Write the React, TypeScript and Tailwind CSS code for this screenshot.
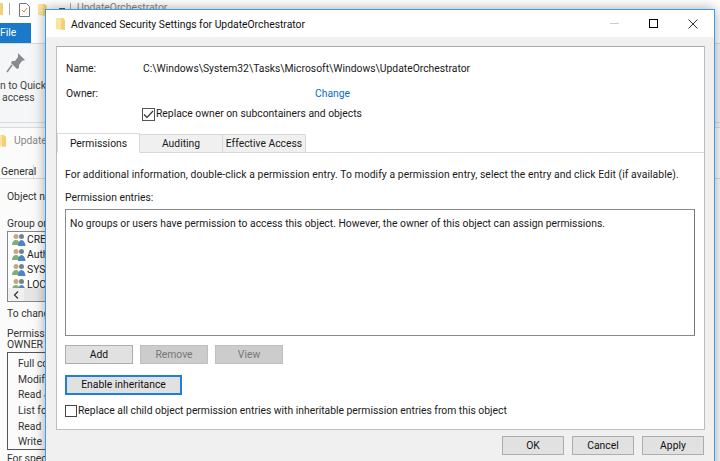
const font = "font-['Roboto',sans-serif]";

function FolderIcon({ className }: { className?: string }) {
  return (
    <svg width="9" height="14" viewBox="0 0 9 14" className={className}>
      <path d="M0 1h7l2 2v10l-9-1z" fill="#f3d277" />
      <path d="M0 1h5v11H0z" fill="#fbe59e" />
    </svg>
  );
}

function UsersIcon() {
  return (
    <svg width="14" height="13" viewBox="0 0 14 13" className="shrink-0">
      <circle cx="4" cy="3.500" r="2.500" fill="#c8a878" />
      <path d="M0 12c0-3 1.500-5 4-5s3.500 2 3.500 5z" fill="#7faf78" />
      <circle cx="9.500" cy="3.500" r="2.500" fill="#6f8296" />
      <path d="M6 13c0-3 1.500-6 3.500-6s4 3 4 6z" fill="#4d85c5" />
    </svg>
  );
}

function WinButton({ children, className = "", w = "w-[62px]" }: { children: string; className?: string; w?: string }) {
  return (
    <button className={`${w} h-[19px] pt-px flex items-center justify-center border ${className || "bg-[#e1e1e1] border-[#adadad] text-[#111]"}`}>
      {children}
    </button>
  );
}

function BackgroundWindow() {
  return (
    <div className="w-full h-full flex flex-col text-[10.350px] text-[#333]">
      {/* quick access bar */}
      <div className="h-[23px] flex items-start pt-[3px] shrink-0 bg-white">
        <div className="w-[3px] h-[12px] bg-[#f3d277]" />
        <div className="w-px h-[12px] bg-[#aaa] ml-[6px]" />
        <svg width="11" height="14" viewBox="0 0 11 14" className="ml-[9px]">
          <path d="M.5.500h7l3 3v10H.500z" fill="#fff" stroke="#777" />
          <path d="M3 7l2 2 3-4" fill="none" stroke="#d98a3a" />
        </svg>
        <FolderIcon className="ml-[8px]" />
        <div className="w-[6px] h-[2px] bg-[#555] ml-[12px] mt-[5px]" />
        <div className="w-px h-[12px] bg-[#aaa] ml-[5px]" />
        <span className="ml-[6px] text-[#888] leading-[10px]">UpdateOrchestrator</span>
      </div>
      {/* ribbon */}
      <div className="h-[105px] shrink-0 bg-[#f5f6f7] border-b border-[#dadbdc] flex flex-col">
        <div className="h-[21px] border-b border-[#dadbdc] shrink-0 bg-white">
          <div className="h-[20px] w-[31px] bg-[#1979ca] text-white leading-[20px]">File</div>
        </div>
        <svg width="22" height="22" viewBox="0 0 22 22" className="mt-[8px] ml-[5px]">
          <path d="M13 1l7 7-3 1-3 4 0 3-2 1-6-6 1-2 3 0 3-4z" fill="#8a8a8a" />
          <path d="M7 13l-5 7" stroke="#8a8a8a" strokeWidth="1.500" />
        </svg>
        <div className="mt-[6px] leading-[12px] whitespace-nowrap text-[#444]">n to Quick</div>
        <div className="ml-[2px] leading-[12px] text-[#444]">access</div>
        <div className="mt-auto h-[5px] border-t border-[#dadbdc]" />
      </div>
      {/* properties sheet */}
      <div className="flex-1 bg-[#fbfbfb] flex flex-col">
        <div className="h-[26px] flex items-center text-[#888] shrink-0">
          <FolderIcon className="-ml-[3px]" />
          <span className="ml-[8px]">Update</span>
        </div>
        <div className="h-[25px] pt-[11px] shrink-0 border-b border-[#d9d9d9]">
          <span className="block w-[34px] leading-[14px] pl-[1px] border-r border-[#d9d9d9]">General</span>
        </div>
        <div className="pl-[7px] flex flex-col whitespace-nowrap">
          <div className="mt-[10px] leading-[16px]">Object na</div>
          <div className="mt-[11px] leading-[16px]">Group or</div>
          <div className="-mt-px w-[60px] h-[71px] border border-[#828790] bg-white flex flex-col overflow-hidden">
            <div className="h-[56px] shrink-0 overflow-hidden">
              {["CRE", "Auth", "SYS", "LOC"].map((t) => (
                <div key={t} className="h-[15px] flex items-center gap-[1px] pl-[4px] text-[#222]">
                  <UsersIcon />
                  <span>{t}</span>
                </div>
              ))}
            </div>
            <div className="flex-1 flex bg-[#e6e6e6] items-center">
              <div className="w-[16px] h-full bg-[#f0f0f0] flex items-center justify-center">
                <svg width="6" height="8" viewBox="0 0 6 8"><path d="M5 .500L1.500 4 5 7.500" fill="none" stroke="#333" strokeWidth="1.200" /></svg>
              </div>
            </div>
          </div>
          <div className="mt-[4px] leading-[16px]">To chang</div>
          <div className="mt-[6px] leading-[11px]">Permissio</div>
          <div className="leading-[11px]">OWNER</div>
          <div className="mt-[2px] w-[60px] h-[98px] border border-[#555] flex flex-col pl-[10px] pt-[3px] text-[#333]">
            {["Full con", "Modify", "Read &", "List fold", "Read", "Write"].map((t) => (
              <div key={t} className="h-[15.700px] leading-[15.700px]">{t}</div>
            ))}
          </div>
          <div className="mt-[2px] leading-[14px]">For speci</div>
        </div>
      </div>
    </div>
  );
}

function Dialog() {
  return (
    <div className="absolute left-[45px] top-[9px] w-[670px] h-[470px] bg-[#f0f0f0] border border-[#3f9be8] border-b-0 shadow-[0_0_12px_rgba(0,0,0,0.35)] flex flex-col text-[10.350px] text-[#1a1a1a]">
      {/* title bar */}
      <div className="h-[27px] bg-white flex items-center shrink-0">
        <FolderIcon className="ml-[10px]" />
        <span className="ml-[6px] pt-[2px] text-[#111]">Advanced Security Settings for UpdateOrchestrator</span>
        <div className="ml-auto flex items-center">
          <div className="w-[9px] h-px bg-[#ccc]" />
          <div className="w-[9px] h-[9px] border border-black ml-[30px]" />
          <svg width="10" height="10" viewBox="0 0 10 10" className="ml-[30px] mr-[16px]">
            <path d="M.5.500l9 9M9.500.500l-9 9" stroke="#333" />
          </svg>
        </div>
      </div>

      {/* main panel */}
      <div className="ml-[10px] mt-[9px] w-[649px] h-[384px] bg-white border border-[#bdbdbd] border-t-[#aaa] shrink-0 flex flex-col">
        <div className="flex pl-[9px] pt-[12px] h-[24px] box-content leading-[20px]">
          <span className="w-[77px]">Name:</span>
          <span>C:\Windows\System32\Tasks\Microsoft\Windows\UpdateOrchestrator</span>
        </div>
        <div className="flex pl-[9px] h-[18px] mt-[1px] leading-[20px]">
          <span className="w-[249px]">Owner:</span>
          <span className="text-[#0a6cc9]">Change</span>
        </div>
        <div className="flex items-center pl-[85px] mt-[3px] h-[18px]">
          <span className="w-[13px] h-[13px] border border-[#555] flex items-center justify-center shrink-0">
            <svg width="11" height="9" viewBox="0 0 11 9"><path d="M1 4.500l3 3 6-6.500" fill="none" stroke="#333" strokeWidth="1.200" /></svg>
          </span>
          <span className="ml-[1px] whitespace-nowrap">Replace owner on subcontainers and objects</span>
        </div>

        {/* tabs */}
        <div className="flex mt-[10px] h-[20px] items-end relative z-10">
          <div className="w-[83px] h-[20px] pt-px bg-white border border-[#d9d9d9] border-b-white flex items-center justify-center">Permissions</div>
          <div className="w-[83px] h-[19px] pt-px bg-[#f0f0f0] border border-[#d9d9d9] border-l-0 flex items-center justify-center">Auditing</div>
          <div className="w-[83px] h-[19px] pt-px bg-[#f0f0f0] border border-[#d9d9d9] border-l-0 flex items-center justify-center whitespace-nowrap">Effective Access</div>
        </div>

        <div className="flex-1 border-t border-[#d9d9d9] -mt-px flex flex-col pl-[8px]">
          <div className="mt-[12px] h-[18px] leading-[20px] whitespace-nowrap tracking-[0.07px]">For additional information, double-click a permission entry. To modify a permission entry, select the entry and click Edit (if available).</div>
          <div className="mt-[5px] h-[18px] leading-[20px]">Permission entries:</div>
          <div className="mt-[3px] w-[630px] h-[127px] border border-[#8a8a8a] border-r-[#777] px-[4px] pt-[4px] leading-[20px]">
            No groups or users have permission to access this object. However, the owner of this object can assign permissions.
          </div>
          <div className="flex gap-[7px] mt-[9px]">
            <WinButton w="w-[68px]">Add</WinButton>
            <WinButton w="w-[68px]" className="bg-[#cccccc] border-[#bfbfbf] text-[#777]">Remove</WinButton>
            <WinButton w="w-[68px]" className="bg-[#cccccc] border-[#bfbfbf] text-[#777]">View</WinButton>
          </div>
          <button className="mt-[11px] w-[117px] h-[20px] bg-[#e1e1e1] border-2 border-[#1f7fdc] flex items-center justify-center text-[#111]">Enable inheritance</button>
          <div className="flex items-center mt-[8px] h-[16px]">
            <span className="w-[12px] h-[12px] border border-[#444] shrink-0" />
            <span className="ml-[1px] whitespace-nowrap">Replace all child object permission entries with inheritable permission entries from this object</span>
          </div>
        </div>
      </div>

      {/* footer buttons */}
      <div className="flex justify-end gap-[8px] mt-[6px] w-[658px]">
        <WinButton>OK</WinButton>
        <WinButton>Cancel</WinButton>
        <WinButton>Apply</WinButton>
      </div>
    </div>
  );
}

export default function App() {
  return (
    <div className={`relative w-[720px] h-[461px] overflow-hidden bg-white ${font}`}>
      <BackgroundWindow />
      <Dialog />
    </div>
  );
}
